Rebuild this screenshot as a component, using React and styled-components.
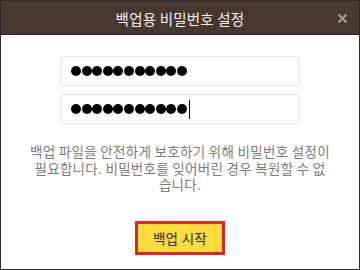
import React from 'react'
import styled, { createGlobalStyle } from 'styled-components'

const Global = createGlobalStyle`
  html, body { margin: 0; padding: 0; background: #ffffff; }
  body { font-family: 'Noto Sans CJK KR', 'Noto Sans', sans-serif; }
`

const Dialog = styled.div`
  width: 360px;
  height: 270px;
  box-sizing: border-box;
  border: 1px solid #2e2826;
  display: flex;
  flex-direction: column;
  background: #ffffff;
`

const TitleBar = styled.div`
  height: 34px;
  flex: none;
  box-sizing: border-box;
  padding-top: 2px;
  background: #46372f;
  border-bottom: 1px solid #2e2522;
  display: flex;
  align-items: center;
  justify-content: center;
  position: relative;
  color: #f4f0ec;
  font-size: 14.5px;
  letter-spacing: 0.2px;
`

const Close = styled.button`
  position: absolute;
  right: 11px;
  top: 12px;
  width: 11px;
  height: 11px;
  padding: 0;
  border: 0;
  background: none;
  display: flex;
`

const Body = styled.div`
  flex: 1;
  display: flex;
  flex-direction: column;
  align-items: center;
  padding-top: 21px;
`

const Fields = styled.div`
  display: flex;
  flex-direction: column;
  gap: 8px;
`

const Field = styled.div`
  width: 240px;
  height: 30px;
  box-sizing: border-box;
  border: 1px solid #e3e3e3;
  border-radius: 3px;
  display: flex;
  align-items: center;
  padding-left: 10px;
  gap: 0.6px;
`

const Dot = styled.span`
  width: 10px;
  height: 10px;
  border-radius: 50%;
  background: #000;
`

const Caret = styled.span`
  width: 1px;
  height: 19px;
  background: #000;
  margin-left: 1px;
`

const Note = styled.p`
  margin: 19px 0 0;
  width: 340px;
  text-align: center;
  color: #7c7c7c;
  font-size: 13.5px;
  letter-spacing: 0.3px;
  line-height: 16.5px;
  white-space: nowrap;
`

const StartButton = styled.button`
  margin-top: 28px;
  width: 90px;
  height: 34px;
  box-sizing: border-box;
  border: 3px solid #e8202a;
  background: #fbdc3c;
  color: #2a2a2a;
  font-family: inherit;
  font-size: 13.5px;
  padding: 0;
  letter-spacing: 0.3px;
`

const PasswordField = ({ count, focused }) => (
  <Field>
    {Array.from({ length: count }).map((_, i) => (
      <Dot key={i} />
    ))}
    {focused && <Caret />}
  </Field>
)

export default function App() {
  return (
    <>
      <Global />
      <Dialog>
        <TitleBar>
          백업용 비밀번호 설정
          <Close aria-label='닫기'>
            <svg width='11' height='11' viewBox='0 0 11 11'>
              <path d='M1.5 1.5 L9.5 9.5 M9.5 1.5 L1.5 9.5' stroke='#a09a97' strokeWidth='2.2' />
            </svg>
          </Close>
        </TitleBar>
        <Body>
          <Fields>
            <PasswordField count={11} />
            <PasswordField count={11} focused />
          </Fields>
          <Note>
            백업 파일을 안전하게 보호하기 위해 비밀번호 설정이
            <br />
            필요합니다. 비밀번호를 잊어버린 경우 복원할 수 없
            <br />
            습니다.
          </Note>
          <StartButton>백업 시작</StartButton>
        </Body>
      </Dialog>
    </>
  )
}
